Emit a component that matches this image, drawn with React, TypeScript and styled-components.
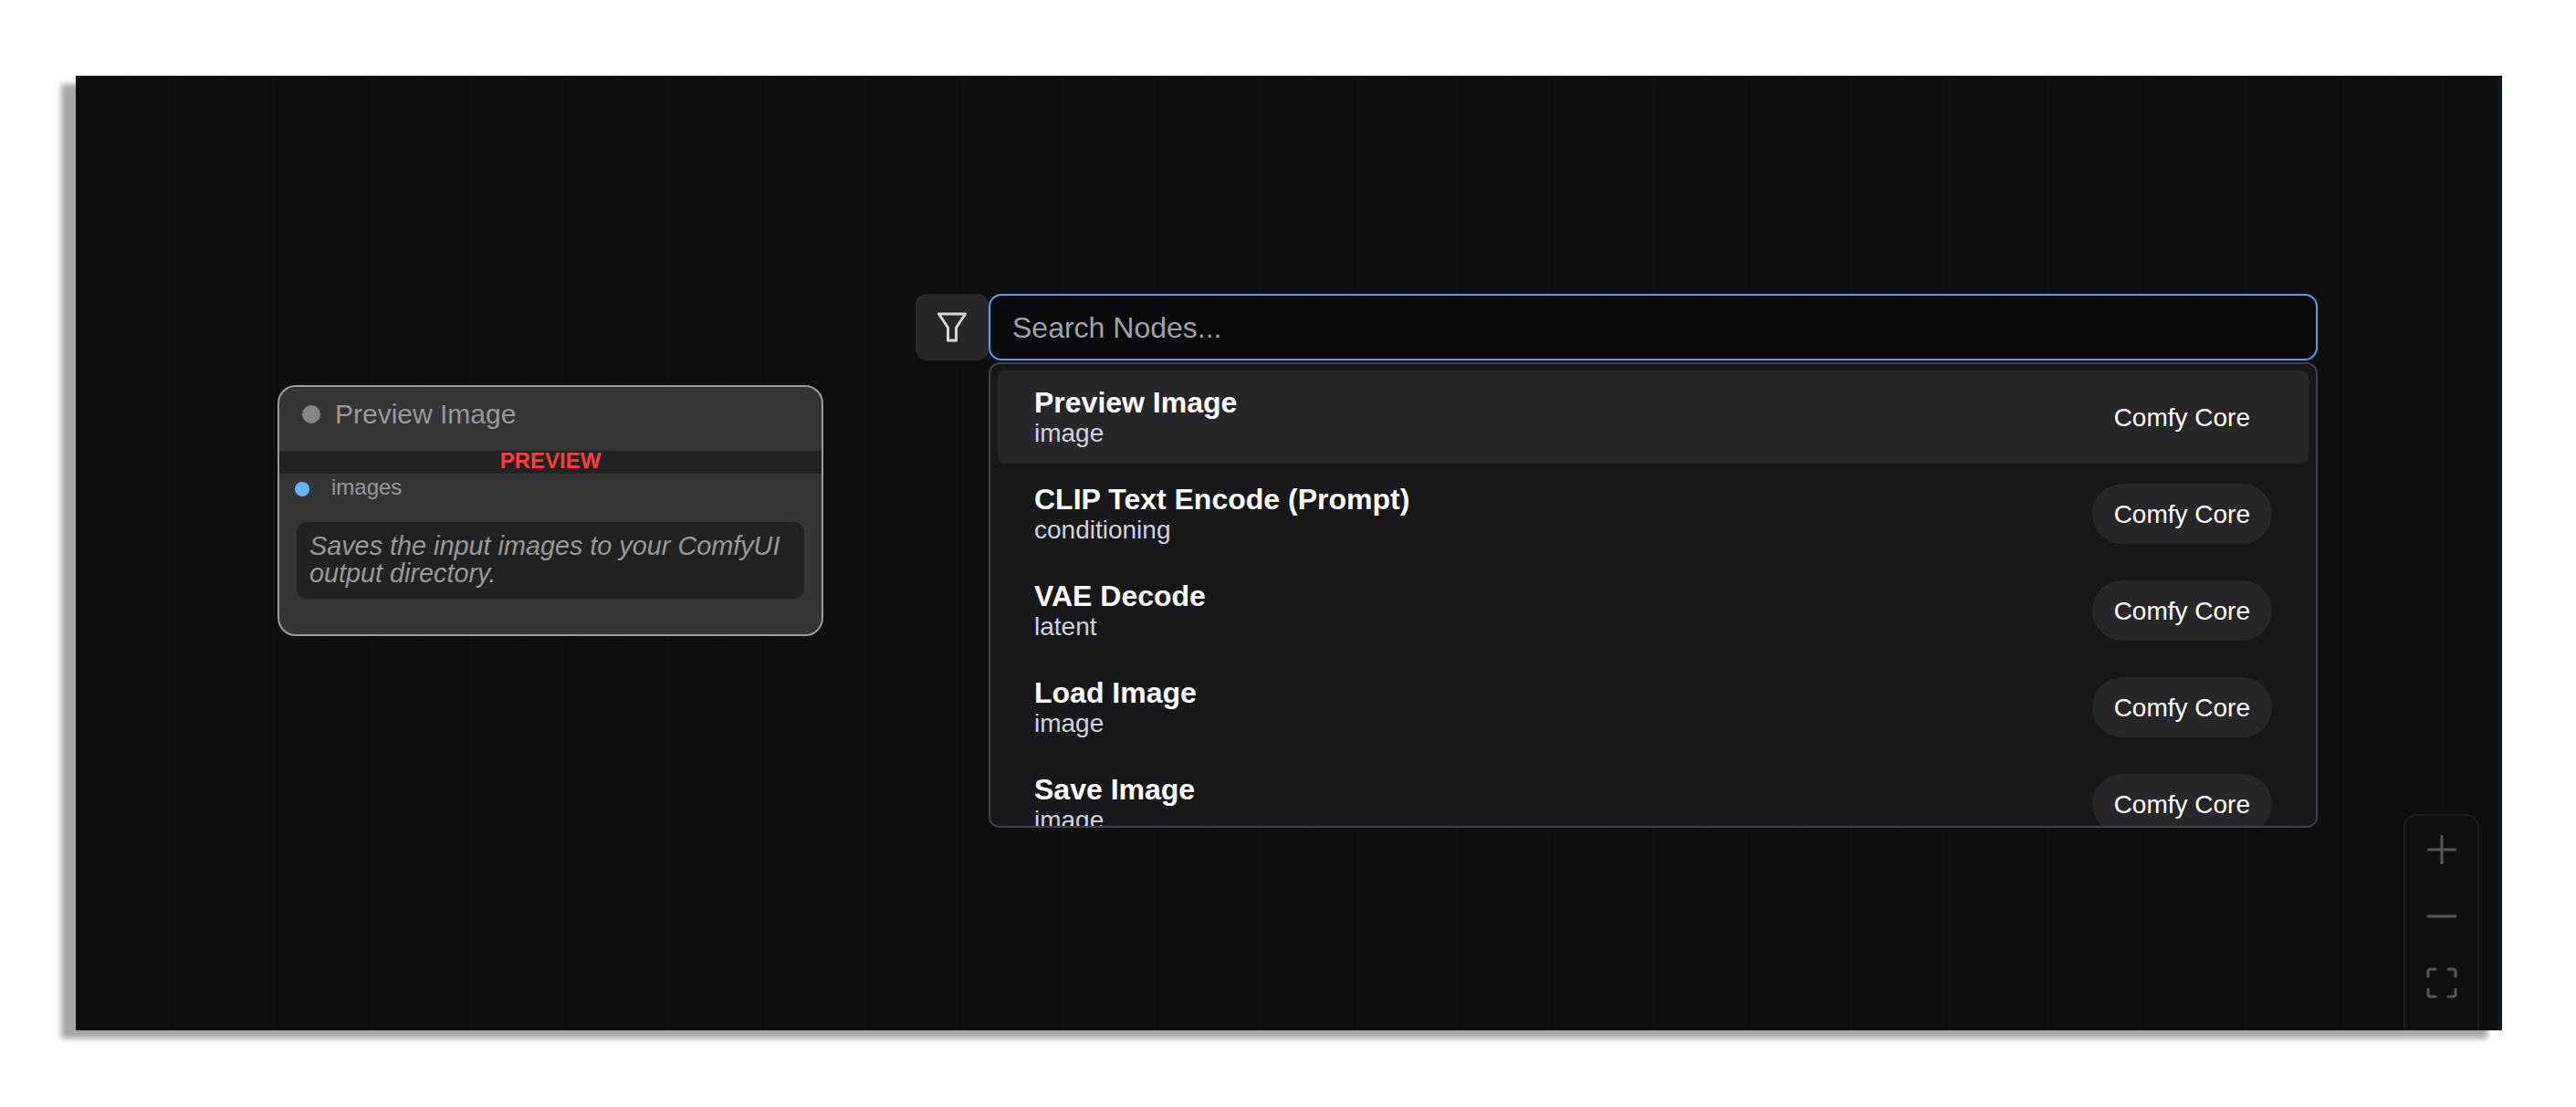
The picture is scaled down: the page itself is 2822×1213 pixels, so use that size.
import React, { FC } from 'react';
import styled, { createGlobalStyle } from 'styled-components';

const GlobalStyle = createGlobalStyle`
  html, body {
    margin: 0;
    padding: 0;
    background: #fff;
    font-family: 'Liberation Sans', Arial, sans-serif;
  }
`;

const Page = styled.div`
  width: 2822px;
  height: 1213px;
  padding: 83px 81px 84px 83px;
  box-sizing: border-box;
`;

const Canvas = styled.div`
  position: relative;
  width: 100%;
  height: 100%;
  overflow: hidden;
  box-sizing: border-box;
  border-right: 5px solid #10181e;
  background-color: #0e0e0e;
  background-image: repeating-linear-gradient(
    90deg,
    rgba(255, 255, 255, 0.006) 0 2px,
    transparent 2px 54px
  );
`;

const Shadow = styled.div`
  width: 100%;
  height: 100%;
  box-shadow: -16px 9px 6px rgba(0, 0, 0, 0.35);
`;

const Node = styled.div`
  position: absolute;
  left: 221px;
  top: 339px;
  width: 598px;
  height: 275px;
  box-sizing: border-box;
  border: 2px solid #9c9c9c;
  border-radius: 20px;
  background: #353535;
  overflow: hidden;
`;

const NodeHeader = styled.div`
  height: 70px;
  box-sizing: border-box;
  padding: 12px 0 0 25px;
  display: flex;
  align-items: flex-start;
  gap: 16px;
  color: #999;
  font-size: 30px;
  line-height: 36px;
`;

const StatusDot = styled.span`
  width: 20px;
  height: 20px;
  margin-top: 8px;
  border-radius: 50%;
  background: #868686;
`;

const PreviewBand = styled.div`
  height: 25px;
  background: #222;
  color: #ff3b3b;
  font-size: 24px;
  font-weight: 700;
  line-height: 22px;
  text-align: center;
`;

const PortRow = styled.div`
  height: 53px;
  box-sizing: border-box;
  padding-left: 17px;
  display: flex;
  align-items: flex-start;
  gap: 24px;
  color: #999;
  font-size: 24px;
  line-height: 30px;
`;

const PortDot = styled.span`
  width: 16px;
  height: 16px;
  margin-top: 9px;
  border-radius: 50%;
  background: #5fb4ff;
`;

const Description = styled.div`
  height: 84px;
  margin: 0 19px;
  padding: 11px 14px 0;
  box-sizing: border-box;
  border-radius: 10px;
  background: #222;
  color: #999;
  font-size: 28.8px;
  font-style: italic;
  line-height: 30px;
`;

const SearchWrap = styled.div`
  position: absolute;
  left: 920px;
  top: 239px;
  width: 1536px;
`;

const SearchBar = styled.div`
  display: flex;
  height: 73px;
`;

const FilterButton = styled.div`
  width: 80px;
  display: flex;
  align-items: center;
  justify-content: center;
  border-radius: 12px;
  background: #27272a;
`;

const SearchInput = styled.input`
  flex: 1;
  min-width: 0;
  box-sizing: border-box;
  padding: 1px 24px 0;
  border: 2px solid #5a9cf0;
  border-radius: 14px;
  outline: none;
  background: #09090b;
  color: #fff;
  font-family: inherit;
  font-size: 32px;

  &::placeholder {
    color: #a1a1aa;
    opacity: 1;
  }
`;

const ResultPanel = styled.div`
  margin: 2px 0 0 80px;
  height: 510px;
  box-sizing: border-box;
  padding: 7px 8px;
  border: 2px solid #3f3f46;
  border-radius: 12px;
  background: #18181b;
  overflow: hidden;
`;

const ResultRow = styled.div<{ $active?: boolean }>`
  height: 102px;
  margin-bottom: 4px;
  flex-shrink: 0;
  padding: 0 40px;
  display: flex;
  align-items: center;
  justify-content: space-between;
  border-radius: 8px;
  background: ${(p) => (p.$active ? '#27272a' : 'transparent')};
`;

const RowText = styled.div`
  display: flex;
  flex-direction: column;
`;

const RowTitle = styled.div`
  color: #fff;
  font-size: 32px;
  font-weight: 700;
  line-height: 36px;
`;

const RowCategory = styled.div`
  margin: 1px 0 2px;
  color: #cbd5e1;
  font-size: 28px;
  line-height: 30px;
`;

const Badge = styled.span`
  height: 66px;
  box-sizing: border-box;
  padding: 1px 24px 0;
  display: flex;
  align-items: center;
  border-radius: 33px;
  background: #27272a;
  color: #fff;
  font-size: 28px;
`;

const ZoomControls = styled.div`
  position: absolute;
  right: 20px;
  top: 809px;
  width: 83px;
  height: 300px;
  box-sizing: border-box;
  border: 2px solid #1b1b1b;
  border-radius: 14px;
  background: #101010;
`;

const ZoomButton = styled.div`
  height: 73px;
  display: flex;
  align-items: center;
  justify-content: center;
`;

const results = [
  { title: 'Preview Image', category: 'image' },
  { title: 'CLIP Text Encode (Prompt)', category: 'conditioning' },
  { title: 'VAE Decode', category: 'latent' },
  { title: 'Load Image', category: 'image' },
  { title: 'Save Image', category: 'image' },
];

const FilterIcon: FC = () => (
  <svg width="32" height="33" viewBox="0 0 32 33" fill="none" stroke="#d8d8d8" strokeWidth="3" strokeLinejoin="round">
    <path d="M1.5 2 H30.5 L20.5 17 V31 H11.5 V17 Z" />
  </svg>
);

const ZoomIcon: FC<{ d: string }> = ({ d }) => (
  <svg width="34" height="34" viewBox="0 0 34 34" fill="none" stroke="#585858" strokeWidth="3" strokeLinecap="round">
    <path d={d} />
  </svg>
);

const App: FC = () => {
  return (
    <Page>
      <GlobalStyle />
      <Shadow>
        <Canvas>
          <Node>
            <NodeHeader>
              <StatusDot />
              Preview Image
            </NodeHeader>
            <PreviewBand>PREVIEW</PreviewBand>
            <PortRow>
              <PortDot />
              images
            </PortRow>
            <Description>Saves the input images to your ComfyUI output directory.</Description>
          </Node>

          <SearchWrap>
            <SearchBar>
              <FilterButton>
                <FilterIcon />
              </FilterButton>
              <SearchInput placeholder="Search Nodes..." />
            </SearchBar>
            <ResultPanel>
              {results.map((r, i) => (
                <ResultRow key={r.title} $active={i === 0}>
                  <RowText>
                    <RowTitle>{r.title}</RowTitle>
                    <RowCategory>{r.category}</RowCategory>
                  </RowText>
                  <Badge>Comfy Core</Badge>
                </ResultRow>
              ))}
            </ResultPanel>
          </SearchWrap>

          <ZoomControls>
            <ZoomButton>
              <ZoomIcon d="M17 2.5 V31.5 M2.5 17 H31.5" />
            </ZoomButton>
            <ZoomButton>
              <ZoomIcon d="M2 17 H32" />
            </ZoomButton>
            <ZoomButton>
              <ZoomIcon d="M2 10 V5 Q2 2 5 2 H10 M24 2 H29 Q32 2 32 5 V10 M32 24 V29 Q32 32 29 32 H24 M10 32 H5 Q2 32 2 29 V24" />
            </ZoomButton>
          </ZoomControls>
        </Canvas>
      </Shadow>
    </Page>
  );
};

export default App;
